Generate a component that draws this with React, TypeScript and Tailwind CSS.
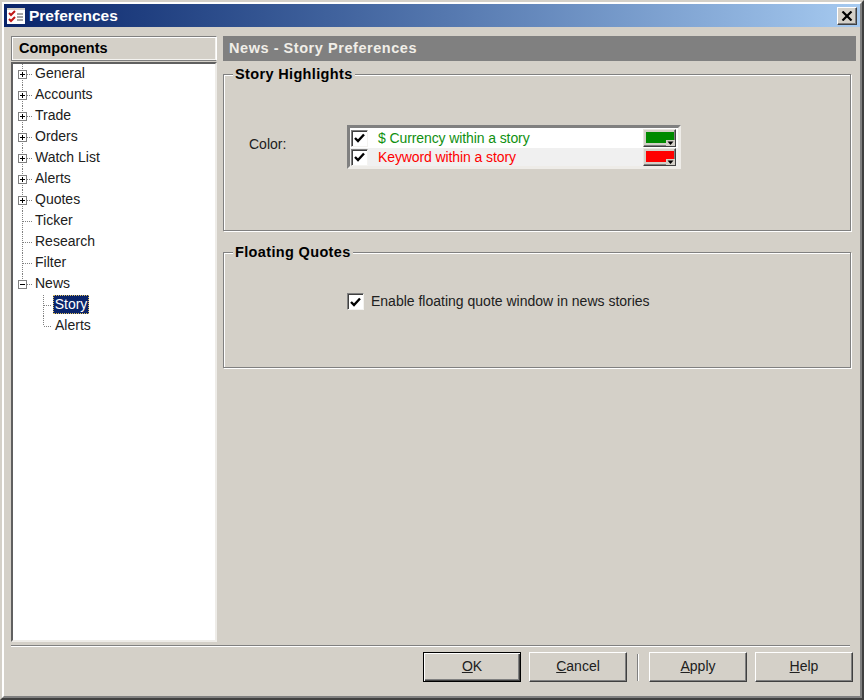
const bevelOut = "border border-t-white border-l-white border-r-[#404040] border-b-[#404040] shadow-[inset_-1px_-1px_0_#808080]";

type TreeItem = { label: string; kind: "plus" | "leaf" | "minus"; last?: boolean };

const items: TreeItem[] = [
  { label: "General", kind: "plus" },
  { label: "Accounts", kind: "plus" },
  { label: "Trade", kind: "plus" },
  { label: "Orders", kind: "plus" },
  { label: "Watch List", kind: "plus" },
  { label: "Alerts", kind: "plus" },
  { label: "Quotes", kind: "plus" },
  { label: "Ticker", kind: "leaf" },
  { label: "Research", kind: "leaf" },
  { label: "Filter", kind: "leaf" },
  { label: "News", kind: "minus", last: true },
];

function Connector({ kind, last }: { kind: TreeItem["kind"]; last?: boolean }) {
  return (
    <svg width="24" height="21" className="shrink-0 block">
      <path d={last ? "M9.5 0V10" : "M9.5 0V21"} stroke="#808080" strokeDasharray="1 1" fill="none" />
      <path d="M10 10.5H20" stroke="#808080" strokeDasharray="1 1" fill="none" />
      {kind !== "leaf" && (
        <>
          <rect x="5.5" y="6.5" width="8" height="8" fill="#fff" stroke="#808080" />
          <path d="M7 10.5H12" stroke="#000" />
          {kind === "plus" && <path d="M9.5 8V13" stroke="#000" />}
        </>
      )}
    </svg>
  );
}

function ChildConnector({ last }: { last?: boolean }) {
  return (
    <svg width="40" height="21" className="shrink-0 block">
      <path d={last ? "M30.5 0V10" : "M30.5 0V21"} stroke="#808080" strokeDasharray="1 1" fill="none" />
      <path d="M31 10.5H39" stroke="#808080" strokeDasharray="1 1" fill="none" />
    </svg>
  );
}

function Check({ className = "" }: { className?: string }) {
  return (
    <span
      className={`flex h-[17px] w-[17px] shrink-0 items-center justify-center border border-t-[#808080] border-l-[#808080] border-r-[#f4f3f0] border-b-[#f4f3f0] bg-white shadow-[inset_1px_1px_0_#404040] ${className}`}
    >
      <svg width="11" height="10" viewBox="0 0 11 10">
        <path d="M1 5L4 8L10 1.5" stroke="#000" strokeWidth="2.4" fill="none" />
      </svg>
    </span>
  );
}

function Swatch({ color }: { color: string }) {
  return (
    <span className="relative ml-auto block h-[18px] w-[33px] border border-t-[#e8e6e0] border-l-[#e8e6e0] border-r-[#404040] border-b-[#404040] bg-[#d4d0c8] p-[2px] shadow-[inset_-1px_-1px_0_#808080]">
      <span className="block h-[11px] w-[28px]" style={{ backgroundColor: color }} />
      <svg width="9" height="6" viewBox="0 0 9 6" className="absolute bottom-0 right-0">
        <path d="M0 0H9V6H0Z" fill="#d4d0c8" />
        <path d="M1.5 1.5H7.5L4.5 5Z" fill="#000" />
      </svg>
    </span>
  );
}

function ColorRow({ label, color, rowClass }: { label: string; color: string; rowClass: string }) {
  return (
    <div className={`flex items-center pl-[1px] pr-[2px] ${rowClass}`}>
      <Check className="mr-[10px]" />
      <span className="tracking-[-0.1px]" style={{ color }}>{label}</span>
      <Swatch color={color === "#109010" ? "#008a00" : color} />
    </div>
  );
}

function GroupBox({ title, className, children }: { title: string; className: string; children: React.ReactNode }) {
  return (
    <div className={`relative w-[628px] border border-[#808080] shadow-[inset_1px_1px_0_#fff,1px_1px_0_#fff] ${className}`}>
      <span className="absolute left-[9px] top-[-11px] bg-[#d4d0c8] px-[2px] text-[14.5px] font-bold leading-[20px] tracking-[0.35px] text-black">
        {title}
      </span>
      {children}
    </div>
  );
}

function Btn({ pre = "", u, rest, primary }: { pre?: string; u: string; rest: string; primary?: boolean }) {
  return (
    <button
      className={`h-[30px] w-[98px] bg-[#d4d0c8] pb-[2px] text-center text-[14px] text-[#202020] ${
        primary
          ? "border border-black shadow-[inset_1px_1px_0_#fff,inset_-1px_-1px_0_#404040,inset_-2px_-2px_0_#808080]"
          : "border border-t-white border-l-white border-r-[#404040] border-b-[#404040] shadow-[inset_-1px_-1px_0_#808080]"
      }`}
    >
      {pre}
      <span className="underline">{u}</span>
      {rest}
    </button>
  );
}

export default function App() {
  return (
    <div className="h-[700px] w-[864px] overflow-hidden bg-[#d4d0c8] font-['Liberation_Sans',Arial,sans-serif] text-[14px] text-black">
      <div className="h-full w-full border-2 border-t-[#d4d0c8] border-l-[#d4d0c8] border-r-[#404040] border-b-[#404040]">
        <div className="flex h-full w-full flex-col border-2 border-t-white border-l-white border-r-[#808080] border-b-[#808080]">
          {/* title bar */}
          <div className="flex h-[23px] shrink-0 items-center bg-gradient-to-r from-[#0a246a] to-[#a6caf0] pl-[3px] pr-[3px]">
            <svg width="18" height="16" viewBox="0 0 18 16" className="shrink-0">
              <rect width="18" height="16" fill="#fff" />
              <path d="M0 0H18V2H0Z" fill="#d4d0c8" />
              <path d="M2 5L4 7L8 3M2 11L4 13L8 9" stroke="#c01818" strokeWidth="2" fill="none" />
              <path d="M10 6H16M10 9H16M10 12H16" stroke="#505050" />
            </svg>
            <span className="ml-[4px] text-[15.5px] font-bold text-white">Preferences</span>
            <span className={`ml-auto flex h-[18px] w-[20px] items-center justify-center bg-[#d4d0c8] ${bevelOut}`}>
              <svg width="12" height="10" viewBox="0 0 12 10">
                <path d="M1.5 0.5L10.5 9.5M10.5 0.5L1.5 9.5" stroke="#000" strokeWidth="2.2" />
              </svg>
            </span>
          </div>

          {/* main */}
          <div className="flex h-[615px] shrink-0 gap-[6px] pl-[7px] pt-[9px]">
            <div className="flex w-[206px] shrink-0 flex-col">
              <div className="flex h-[25px] shrink-0 items-center border border-t-[#808080] border-l-[#808080] border-r-white border-b-[#808080] pl-[7px] text-[14.5px] font-bold shadow-[inset_1px_1px_0_#fff,inset_-1px_-1px_0_#f4f3f0]">
                Components
              </div>
              <div className="mt-px flex-1 border-2 border-t-[#606060] border-l-[#606060] border-r-[#eeece8] border-b-[#eeece8] bg-white text-[#202020]">
                {items.map((it) => (
                  <div key={it.label} className="flex h-[21px] items-center">
                    <Connector kind={it.kind} last={it.last} />
                    <span className="-ml-[2px] -mt-[2px]">{it.label}</span>
                  </div>
                ))}
                <div className="flex h-[21px] items-center">
                  <ChildConnector />
                  <span className="-mt-[3px] flex h-[19px] w-[36px] items-center justify-center border border-dotted border-[#e0c060] bg-[#0a246a] text-white">
                    Story
                  </span>
                </div>
                <div className="flex h-[21px] items-center">
                  <ChildConnector last />
                  <span className="-mt-[2px] pl-[2px]">Alerts</span>
                </div>
              </div>
            </div>

            <div className="flex w-[633px] shrink-0 flex-col">
              <div className="flex h-[25px] shrink-0 items-center bg-[#808080] pl-[6px] text-[14.5px] font-bold tracking-[0.55px] text-[#f0eee8]">
                News - Story Preferences
              </div>

              <GroupBox title="Story Highlights" className="mt-[13px] h-[157px]">
                <div className="flex items-center pl-[25px] pt-[50px]">
                  <span className="mb-[6px] w-[98px] text-[#202020]">Color:</span>
                  <div className="w-[334px] border-[3px] border-t-[#808080] border-l-[#808080] border-r-[#eeece8] border-b-[#eeece8] bg-white">
                    <ColorRow label="$ Currency within a story" color="#109010" rowClass="h-[20px] bg-white" />
                    <ColorRow label="Keyword within a story" color="#ff0000" rowClass="h-[18px] bg-[#f0f0f0]" />
                  </div>
                </div>
              </GroupBox>

              <GroupBox title="Floating Quotes" className="mt-[21px] h-[116px]">
                <div className="flex items-center gap-[7px] pl-[123px] pt-[38px]">
                  <Check />
                  <span className="text-[#202020]">Enable floating quote window in news stories</span>
                </div>
              </GroupBox>
            </div>
          </div>

          {/* footer */}
          <div className="ml-[7px] mt-[3px] h-[2px] w-[839px] shrink-0 border-t border-b border-t-[#808080] border-b-white" />
          <div className="flex shrink-0 items-center justify-end pt-[5px] pr-[7px]">
            <Btn u="O" rest="K" primary />
            <div className="ml-[8px]" />
            <Btn u="C" rest="ancel" />
            <div className="mx-[10px] h-[27px] w-[2px] border-l border-r border-l-[#808080] border-r-white" />
            <Btn u="A" rest="pply" />
            <div className="ml-[8px]" />
            <Btn u="H" rest="elp" />
          </div>
        </div>
      </div>
    </div>
  );
}
